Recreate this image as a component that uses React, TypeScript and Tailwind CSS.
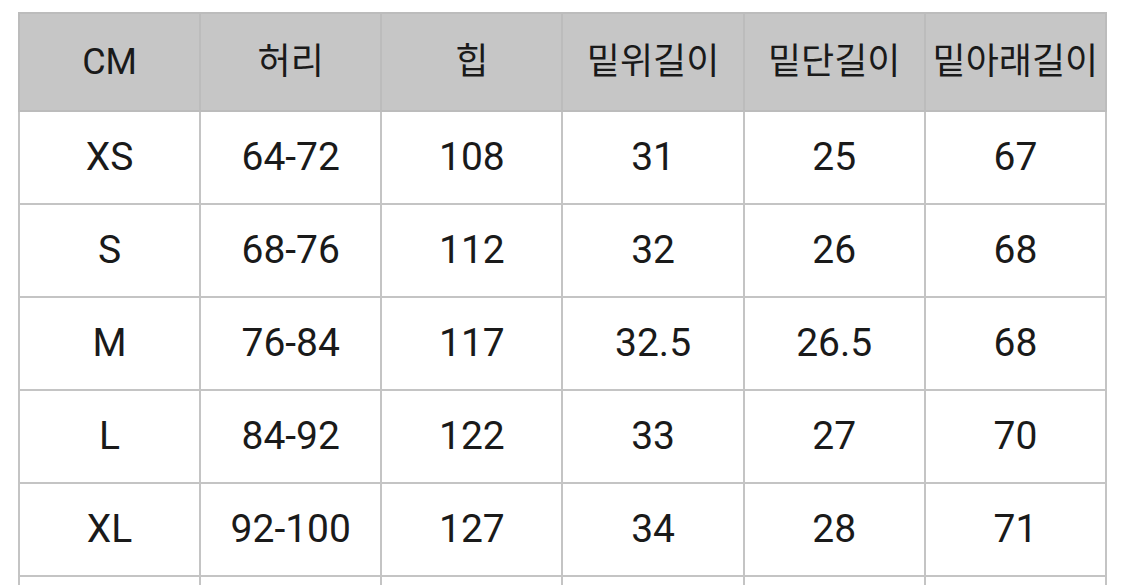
const headers = ['CM', '허리', '힙', '밑위길이', '밑단길이', '밑아래길이'];

const rows = [
  ['XS', '64-72', '108', '31', '25', '67'],
  ['S', '68-76', '112', '32', '26', '68'],
  ['M', '76-84', '117', '32.5', '26.5', '68'],
  ['L', '84-92', '122', '33', '27', '70'],
  ['XL', '92-100', '127', '34', '28', '71'],
  // next row only shows its top edge in the crop
  ['', '', '', '', '', ''],
];

export default function App() {
  return (
    <div
      className="h-[585px] w-[1125px] overflow-hidden bg-white pl-[18px] pt-[12px] text-[#1a1a1a]"
      style={{ fontFamily: 'Roboto, "Noto Sans CJK KR", sans-serif' }}
    >
      <table className="w-[1089px] table-fixed border-collapse">
        <thead>
          <tr className="h-[98px] bg-[#c6c6c6]">
            {headers.map((h) => (
              <th
                key={h}
                className="border-2 border-[#bcbcbc] text-center text-[36px] font-normal"
              >
                {h}
              </th>
            ))}
          </tr>
        </thead>
        <tbody>
          {rows.map((row, r) => (
            <tr key={r} className="h-[93px]">
              {row.map((cell, i) => (
                <td
                  key={i}
                  className="border-2 border-[#c4c4c4] text-center text-[39px]"
                >
                  {cell}
                </td>
              ))}
            </tr>
          ))}
        </tbody>
      </table>
    </div>
  );
}
